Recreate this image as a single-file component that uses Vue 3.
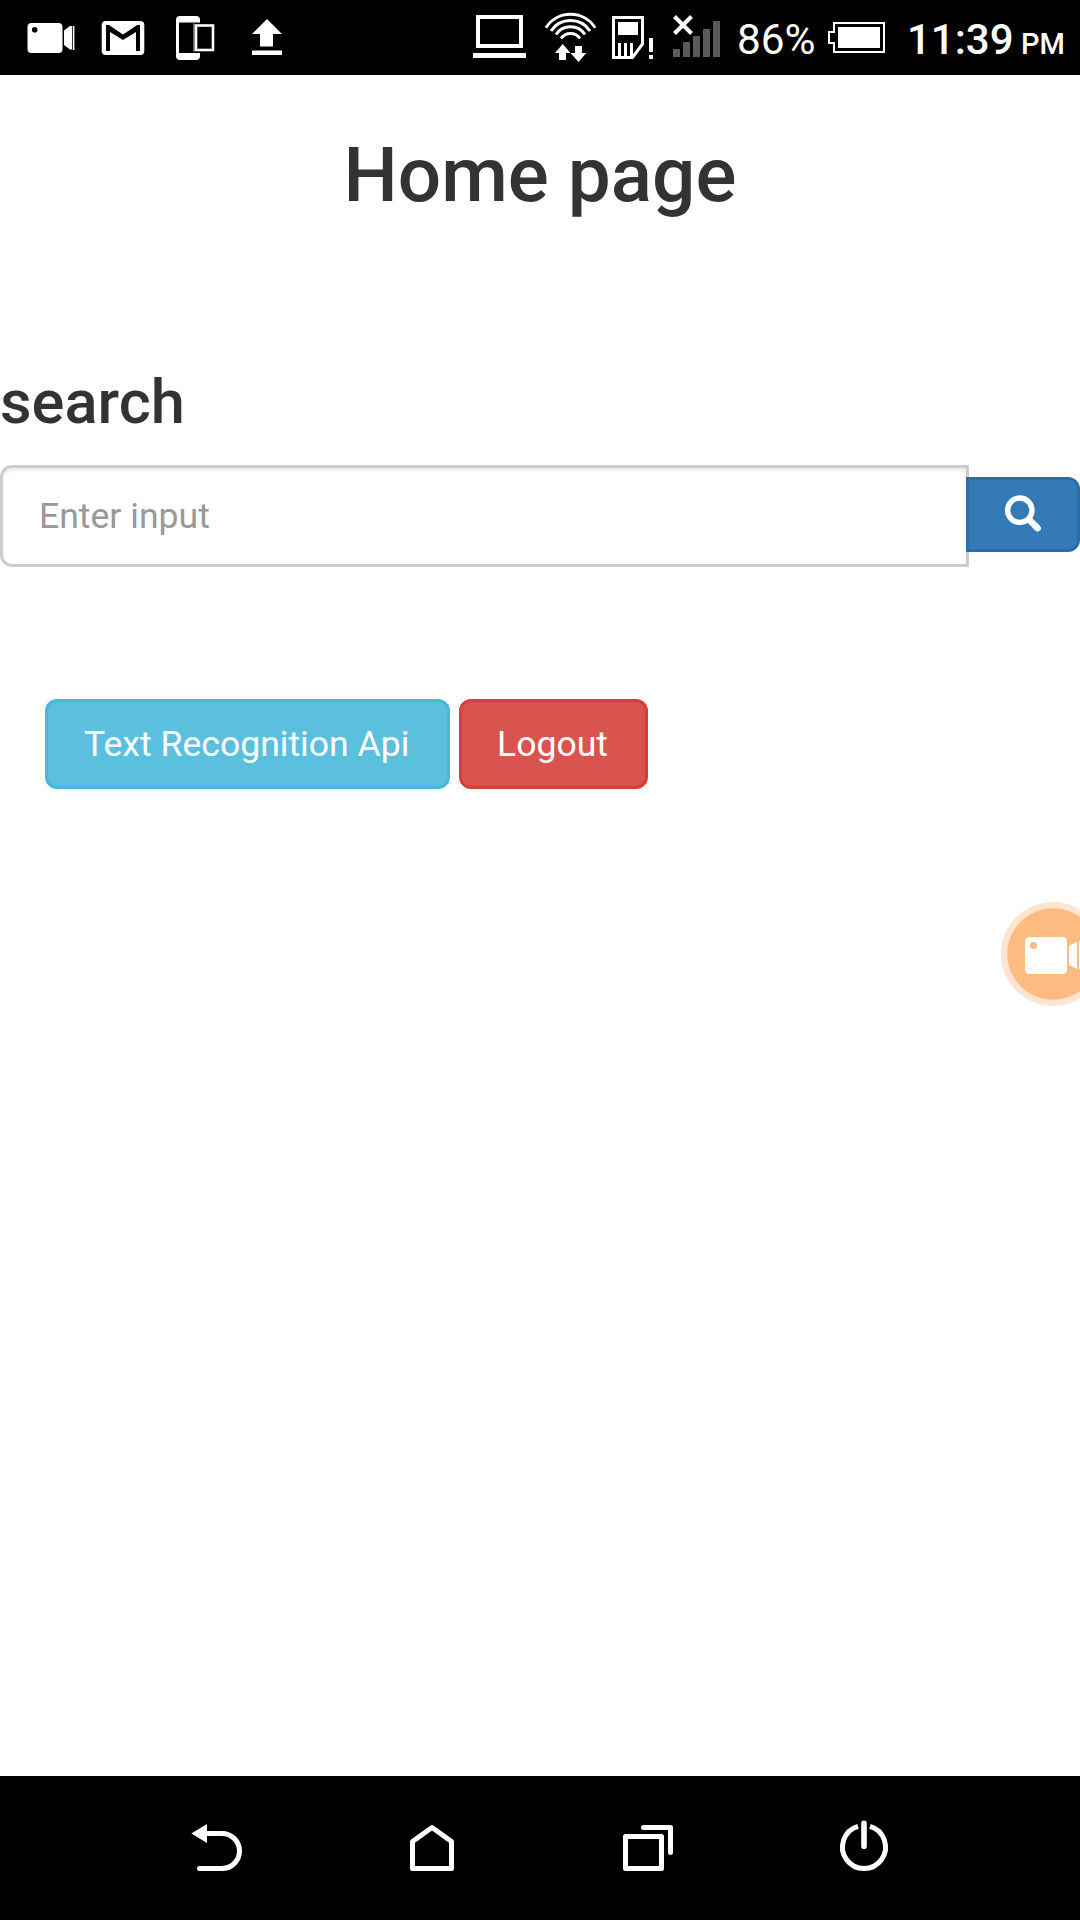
<script setup>
import { ref } from 'vue'

const query = ref('')
const signal = [
  { x: 673, y: 49 },
  { x: 683, y: 42 },
  { x: 693, y: 36 },
  { x: 703, y: 29 },
  { x: 713, y: 21 },
]
</script>

<template>
  <div class="screen">
    <header class="status">
      <svg width="160" height="75" viewBox="0 0 160 75" fill="#fff">
        <rect x="27.500" y="23" width="35" height="30" rx="4" />
        <circle cx="34.700" cy="29.700" r="2.800" fill="#000" />
        <path d="M64 30.500L70 26H72V49.500H70L64 45Z" />
        <path d="M72.800 26H74v24H72.800z" />
        <path d="M74 26h.800v24H74z" opacity=".5" />
        <rect x="101.700" y="21" width="42.600" height="34" rx="4" />
        <path d="M106 51V25h2.800L123 34.600 137.200 25H140V51h-4V32L123 40 110 32V51Z" fill="#000" />
      </svg>
      <svg width="140" height="75" viewBox="160 0 140 75" fill="#fff">
        <rect x="176" y="16" width="24" height="44" rx="4" />
        <rect x="179" y="22.500" width="21" height="30.500" fill="#000" />
        <rect x="193.300" y="23.500" width="1.300" height="28" opacity=".6" />
        <rect x="196" y="25.500" width="17" height="24.500" fill="#000" stroke="#fff" stroke-width="2.600" />
        <path d="M267 19L282 34H273V46.500H260V34H252Z" />
        <rect x="252" y="50.500" width="30" height="4.500" />
      </svg>
      <span class="spacer"></span>
      <svg width="140" height="75" viewBox="460 0 140 75" fill="#fff">
        <path d="M476 15h47v33h-47zM480 19v25h39V19z" fill-rule="evenodd" />
        <rect x="473" y="53" width="53" height="5" />
        <g fill="none" stroke="#fff" stroke-width="3">
          <path d="M545.800 27.700A29.500 29.500 0 0 1 595.200 27.700" />
          <path d="M551 31A23.500 23.500 0 0 1 590 31" />
          <path d="M556 34.500A17.500 17.500 0 0 1 585 34.500" />
          <path d="M561 38.500A11.500 11.500 0 0 1 580 38.500" />
        </g>
        <path d="M562.700 44L570.500 53H566V60H559V53H555Z" />
        <path d="M575 46H582V53H586.300L578.500 62 570.500 53H575Z" />
      </svg>
      <svg width="130" height="75" viewBox="600 0 130 75" fill="#fff">
        <path d="M613.500 17.500H642.500V44L632.500 57.500H613.500Z" fill="none" stroke="#fff" stroke-width="3" />
        <rect x="618" y="22" width="20" height="13" />
        <path d="M618 43h3v14h-3zM624 43h3v14h-3zM630 43h3v14h-3zM649 38h4v14h-4zM649 55h4v4h-4z" />
        <path d="M674.500 16.500L691.500 33.500M691.500 16.500L674.500 33.500" stroke="#fff" stroke-width="4" />
        <rect v-for="b in signal" :key="b.x" :x="b.x" :y="b.y" width="7" :height="57 - b.y" fill="#5a5a5a" />
      </svg>
      <span class="percent">86%</span>
      <svg width="75" height="75" viewBox="825 0 75 75">
        <path d="M834 23H884V52H834V43H829V32H834Z" fill="none" stroke="#fff" stroke-width="2" />
        <rect x="838" y="27" width="42" height="21" fill="#fff" />
      </svg>
      <span class="time">11:39</span>
      <span class="pm">PM</span>
    </header>

    <main class="page">
      <h1>Home page</h1>
      <h2>search</h2>
      <form class="search" @submit.prevent>
        <input v-model="query" type="text" placeholder="Enter input" />
        <button class="go" type="submit" aria-label="search">
          <svg width="40" height="40" viewBox="1004 494 40 40" fill="none" stroke="#fff">
            <circle cx="1019.800" cy="510.200" r="12.200" stroke-width="5.400" />
            <path d="M1029 519.500L1037 527.500" stroke-width="6.500" />
            <path d="M1036 526.500L1037.700 528.200" stroke-width="6.500" stroke-linecap="round" />
          </svg>
        </button>
      </form>
      <div class="actions">
        <button class="btn info">Text Recognition Api</button>
        <button class="btn danger">Logout</button>
      </div>
    </main>

    <svg class="recorder" width="80" height="106" viewBox="1000 901 80 106">
      <circle cx="1053" cy="954" r="52" fill="#fde5d1" />
      <circle cx="1053" cy="954" r="45.700" fill="#fcbb80" />
      <rect x="1025" y="937" width="42" height="37" rx="4.500" fill="#fff" />
      <circle cx="1033.500" cy="945.500" r="3.600" fill="#fcbb80" />
      <path d="M1069 946L1077 941.500V969L1069 965ZM1079 941h1v28h-1z" fill="#fff" />
    </svg>

    <nav class="nav">
      <svg width="1080" height="144" viewBox="0 1776 1080 144" fill="none" stroke="#fff" stroke-width="5" stroke-linecap="round" stroke-linejoin="round">
        <path d="M191.300 1833.400L207 1824V1843Z" fill="#fff" stroke="none" />
        <path d="M206 1833.500H222A17.500 17.500 0 0 1 222 1868.500H199.500" />
        <path d="M412.500 1868.500H451.500V1841.500L432 1827.500 412.500 1841.500Z" />
        <rect x="625.500" y="1836.500" width="36" height="32" />
        <path d="M643.500 1827.500H670.500V1852.500" />
        <path d="M870 1826.400A21.500 21.500 0 1 1 858 1826.400" stroke-linecap="butt" />
        <path d="M864 1823.200V1846.200" stroke-width="5.600" />
      </svg>
    </nav>
  </div>
</template>

<style>
body {
  margin: 0;
  background: #fff;
}
</style>

<style scoped>
.screen {
  position: relative;
  display: flex;
  flex-direction: column;
  width: 1080px;
  height: 1920px;
  overflow: hidden;
  background: #fff;
  color: #333;
  font-family: Roboto, sans-serif;
}
svg {
  display: block;
  flex: none;
}
.status {
  display: flex;
  flex: none;
  height: 75px;
  background: #000;
  color: #fff;
  white-space: nowrap;
}
.spacer {
  width: 160px;
}
.percent {
  width: 88px;
  padding-left: 7px;
  font-size: 42.3px;
  line-height: 79px;
}
.time {
  width: 114px;
  padding-left: 7px;
  font-size: 42px;
  font-weight: 500;
  line-height: 79px;
}
.pm {
  font-size: 29px;
  font-weight: 500;
  line-height: 88px;
}
.page {
  flex: 1;
}
h1,
h2 {
  margin: 0;
  font-weight: 500;
}
h1 {
  padding-top: 58px;
  font-size: 76.5px;
  line-height: 84px;
  text-align: center;
}
h2 {
  margin-top: 150px;
  font-size: 61.4px;
  line-height: 70px;
}
.search {
  display: flex;
  align-items: flex-start;
  margin-top: 28px;
}
input {
  box-sizing: border-box;
  width: 969px;
  height: 102px;
  padding: 0 36px;
  border: 3px solid #ccc;
  border-radius: 12px 0 0 12px;
  outline: none;
  background: #fff;
  box-shadow: inset 0 3px 3px rgba(0, 0, 0, 0.075);
  font: 35.6px Roboto, sans-serif;
}
input::placeholder {
  color: #999;
}
.go {
  display: flex;
  box-sizing: border-box;
  width: 114px;
  height: 75px;
  margin: 12px 0 0 -3px;
  padding: 14px 0 0 35px;
  border: 3px solid #2e6da4;
  border-radius: 0 12px 12px 0;
  background: #337ab7;
}
.actions {
  display: flex;
  gap: 9px;
  margin: 132px 0 0 45px;
}
.btn {
  box-sizing: border-box;
  height: 90px;
  padding: 0 34px 1px 35px;
  border: 3px solid;
  border-radius: 12px;
  color: #fff;
  font: 35.6px Roboto, sans-serif;
  text-align: left;
  white-space: nowrap;
}
.info {
  width: 405px;
  padding-left: 36px;
  border-color: #46b8da;
  background: #5bc0de;
}
.danger {
  width: 189px;
  border-color: #d43f3a;
  background: #d9534f;
}
.recorder {
  position: absolute;
  top: 901px;
  right: 0;
}
.nav {
  flex: none;
  height: 144px;
  background: #000;
}
</style>
